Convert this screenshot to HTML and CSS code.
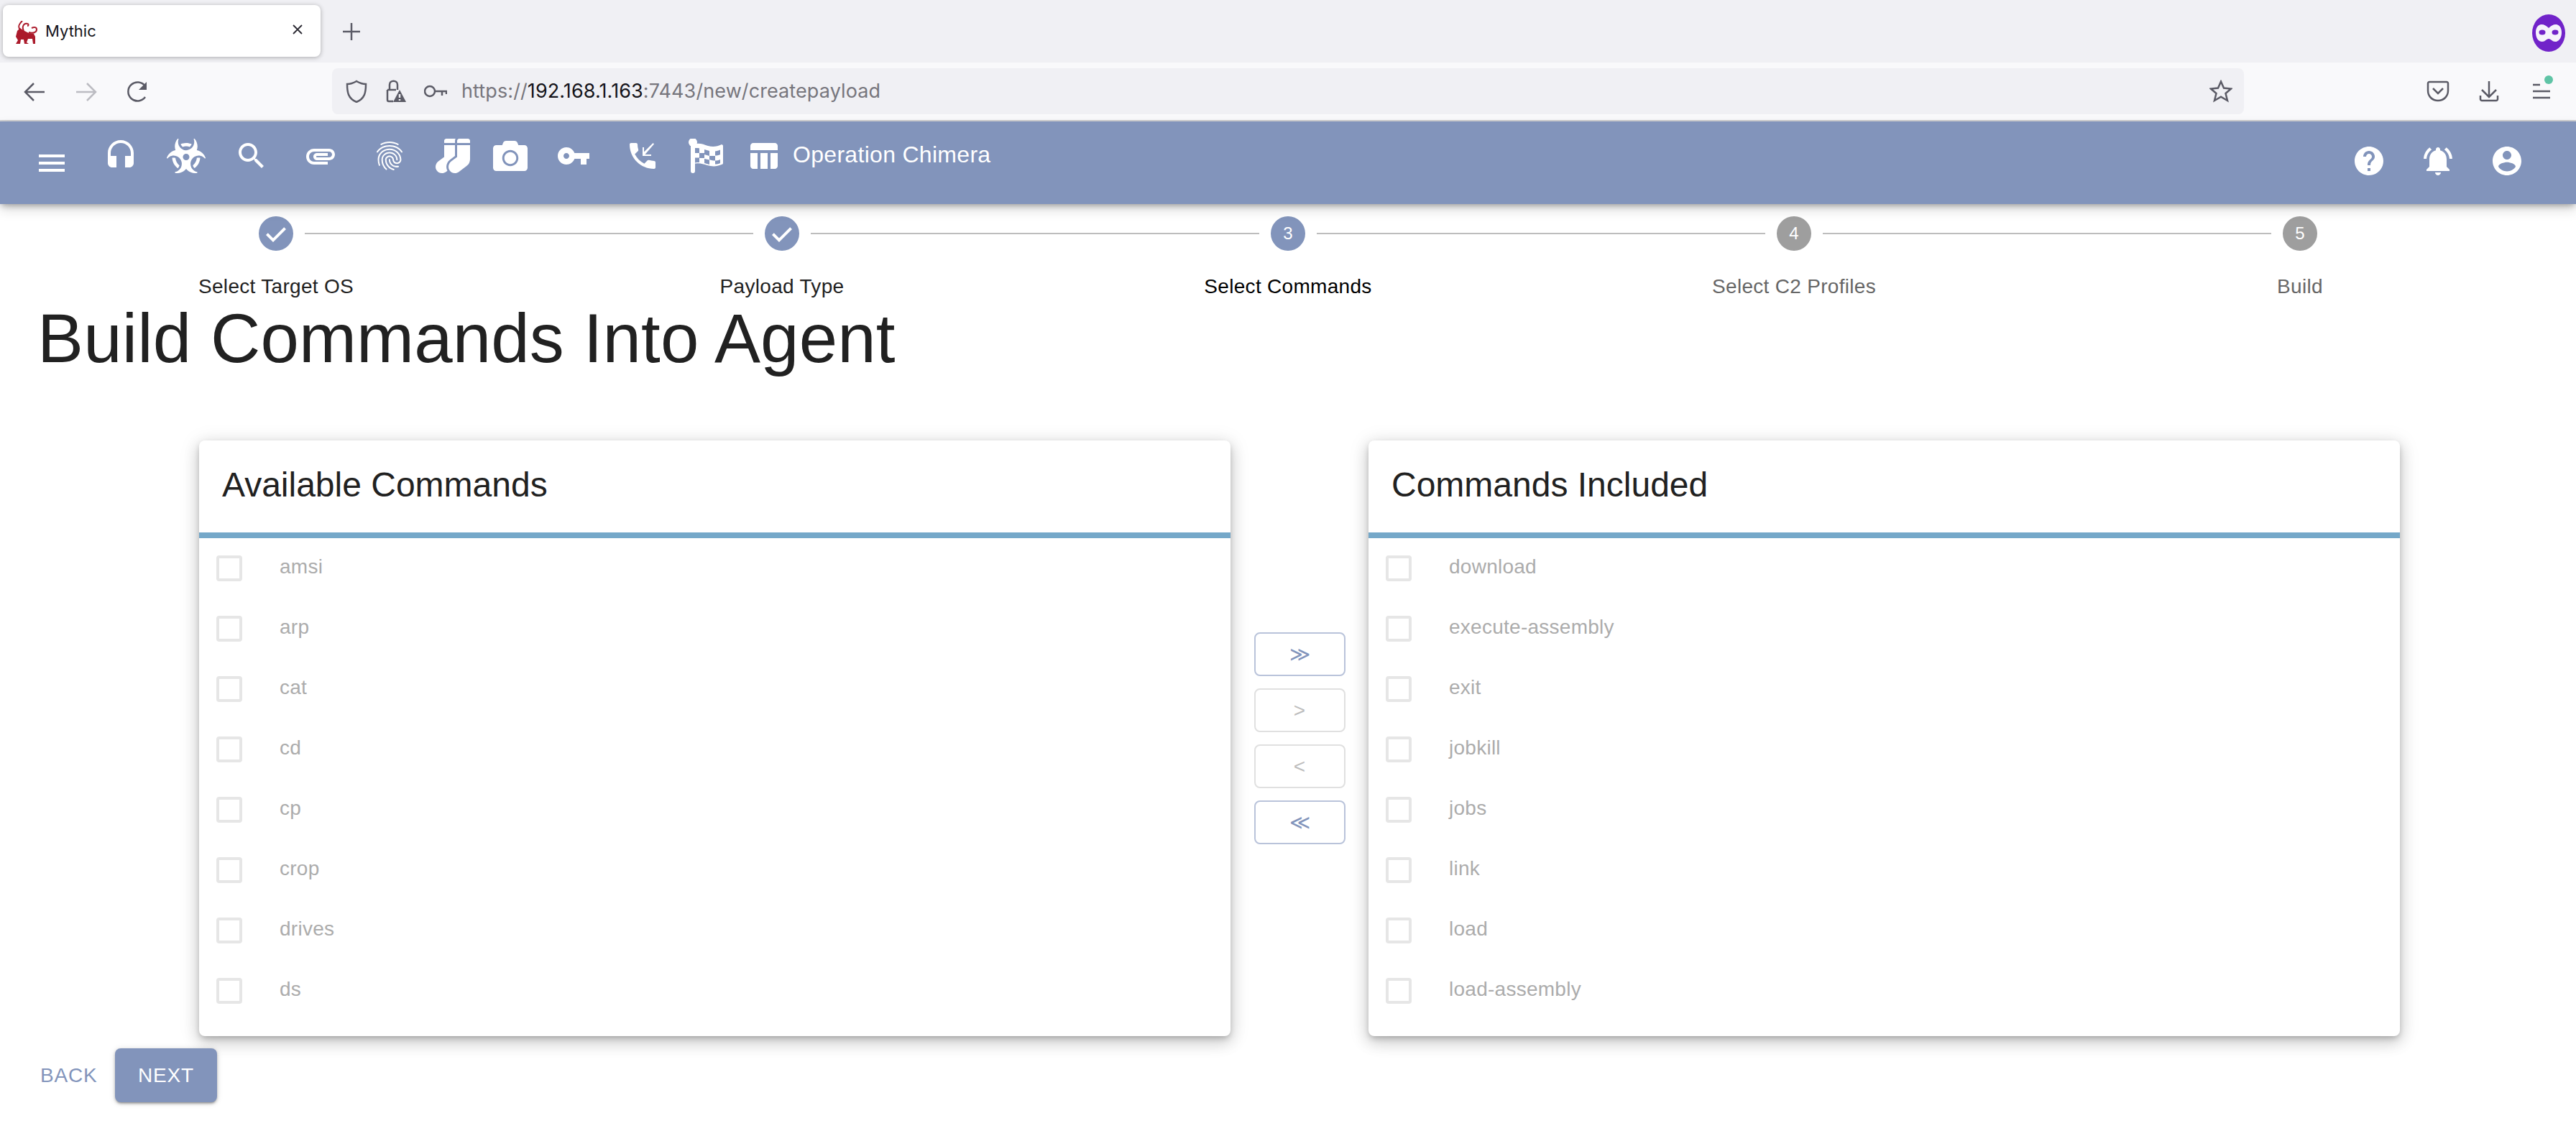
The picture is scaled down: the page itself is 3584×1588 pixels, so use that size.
FILE: index.html
```html
<!DOCTYPE html>
<html lang="en">
<head>
<meta charset="utf-8">
<title>Mythic</title>
<link rel="stylesheet" href="styles.css">
</head>
<body>
<div class="tabstrip">
  <div class="tab">
    <svg class="favicon" viewBox="0 0 32 32"><path class="fav-body" d="M4 14 8 10l4 3 8 4 7 1 2 4v10h-3l-1-7h-6l-2 5 3 2h-6l-1-6H9l-1 6H2l3-5-3-5z"/><path class="fav-curl" d="M8 12C4 8 7 4 11 0M13 14c-3-6 0-11 5-10 2 0 2 3 0 3M20 16c6 2 11 0 11-4 0-3-3-4-7-2"/></svg>
    <span class="tab-title">Mythic</span>
    <svg class="tab-close" viewBox="0 0 16 16"><path d="M2 2l12 12M14 2L2 14"/></svg>
  </div>
  <svg class="newtab" viewBox="0 0 24 24"><path d="M12 0v24M0 12h24"/></svg>
  <svg class="ext-mask" viewBox="0 0 46 52"><ellipse cx="23" cy="26" rx="23" ry="26" fill="#7123c9"/><path fill="#f6f3fb" d="M13 14c4 0 7 2 10 5 3-3 6-5 10-5 5 0 8 5 8 11 0 7-3 13-9 13-4 0-6-4-9-4s-5 4-9 4c-6 0-9-6-9-13 0-6 3-11 8-11z"/><ellipse cx="14" cy="25" rx="4.500" ry="3.500" fill="#7123c9"/><ellipse cx="32" cy="25" rx="4.500" ry="3.500" fill="#7123c9"/></svg>
</div>
<div class="toolbar">
  <svg class="tb-icon" viewBox="0 0 32 32"><path d="M30 16H4M15 4L3 16l12 12"/></svg>
  <svg class="tb-icon tb-dim" viewBox="0 0 32 32"><path d="M2 16h26M17 4l12 12-12 12"/></svg>
  <svg class="tb-icon" viewBox="0 0 32 32"><path d="M26 23a13 13 0 1 1 0-15"/><path class="solid" d="M28 2v11H17z"/></svg>
  <div class="urlbar">
    <svg class="tb-icon" viewBox="0 0 32 32"><path d="M16 2C11 5 6 6 3 6c0 11 1 20 13 25C28 26 29 17 29 6c-3 0-8-1-13-4z"/></svg>
    <svg class="tb-icon url-lock" viewBox="0 0 32 32"><path d="M6 14h12M6 14v14c0 1 0 2 2 2h6M9 14V7c0-7 11-7 11 0v7"/><path class="solid" d="M23 14l9 17H14z"/><path class="cut" d="M23 20v5M23 27v2"/></svg>
    <svg class="tb-icon url-key" viewBox="0 0 32 32"><circle cx="8" cy="16" r="7"/><path d="M15 16h17M25 16v6M31 16v4"/></svg>
    <span class="url-text">https://<span class="url-host">192.168.1.163</span>:7443/new/createpayload</span>
    <svg class="tb-icon url-star" viewBox="0 0 32 32"><path d="M16 2.500l4 9 10 1-7.500 6.500 2.500 10-9-5.300-9 5.300 2.500-10L2 12.500l10-1z"/></svg>
  </div>
  <svg class="tb-icon tb-pocket" viewBox="0 0 32 32"><path d="M4 3h24c1 0 2 1 2 2v10c0 8-6 14-14 14S2 23 2 15V5c0-1 1-2 2-2zM9 12l7 7 7-7"/></svg>
  <svg class="tb-icon tb-download" viewBox="0 0 32 32"><path d="M16 2v22M6 14l10 10 10-10M4 22v5c0 1 1 2 2 2h20c1 0 2-1 2-2v-5"/></svg>
  <div class="tb-menu">
    <svg class="tb-icon" viewBox="0 0 32 32"><path d="M4 7h10M4 16h24M4 25h24"/></svg>
    <span class="tb-badge"></span>
  </div>
</div>

<header class="appbar">
  <svg class="ic ic-menu" viewBox="0 0 24 24"><path d="M3 18h18v-2H3v2zm0-5h18v-2H3v2zm0-7v2h18V6H3z"/></svg>
  <svg class="ic g48" viewBox="0 0 24 24"><path d="M12 1c-4.970 0-9 4.030-9 9v7c0 1.660 1.340 3 3 3h3v-8H5v-2c0-3.870 3.130-7 7-7s7 3.130 7 7v2h-4v8h3c1.660 0 3-1.340 3-3v-7c0-4.970-4.030-9-9-9z"/></svg>
  <svg class="ic ic-wide g40" viewBox="0 0 576 512"><path d="M287.900 112c18.600 0 36.200 3.800 52.800 9.600 13.300-10.300 23.600-24.300 29.500-40.700-25.200-10.900-53-17-82.200-17-29.100 0-56.900 6-82.100 16.900 5.900 16.400 16.200 30.400 29.500 40.700 16.500-5.700 34-9.500 52.500-9.500zM163.600 438.700c12-11.800 20.400-26.400 24.500-42.400-32.900-26.400-54.800-65.300-58.900-109.600-8.500-2.800-17.200-4.600-26.400-4.600-7.600 0-15.200 1-22.500 3.100 4.100 62.800 36.500 118.300 83.300 153.500zm224.200-42.600c4.100 16 12.500 30.700 24.500 42.500 46.800-35.200 79.200-90.700 83.300-153.500-7.300-2-14.900-3.100-22.500-3.100-9.200 0-17.900 1.900-26.400 4.600-4.100 44.300-26 83.200-58.900 109.500zm113.500-205c-17.600-10.400-36.300-16.600-55.300-19.900 6-17.700 10-36.400 10-56.200 0-41-14.500-80.800-41-112.200-2.500-3-6.600-3.700-10-1.800-3.300 1.900-4.800 6-3.600 9.700 4.500 13.800 6.600 26.300 6.600 38.500 0 67.800-53.800 122.900-120 122.900S168 117 168 49.200c0-12.100 2.200-24.700 6.600-38.500 1.200-3.700-.3-7.800-3.600-9.700-3.400-1.900-7.500-1.200-10 1.800C134.600 34.200 120 74 120 115c0 19.800 3.900 38.500 10 56.200-18.900 3.300-37.700 9.500-55.300 19.900-34.600 20.500-61 53.300-74.300 92.400-1.300 3.700.2 7.700 3.500 9.800 3.300 2 7.500 1.300 10-1.600 9.400-10.800 19-19.100 29.200-25.100 57.300-33.900 130.800-13.700 163.900 45 33.100 58.700 13.400 134-43.900 167.900-10.200 6.100-22 10.400-35.800 13.400-3.700.8-6.400 4.200-6.400 8.100.1 4 2.700 7.300 6.500 8 39.700 7.800 80.600.8 115.200-19.700 18-10.600 32.900-24.500 45.300-40.100 12.400 15.600 27.300 29.500 45.300 40.100 34.600 20.500 75.500 27.500 115.200 19.700 3.800-.7 6.400-4 6.500-8 0-3.900-2.600-7.200-6.400-8.100-13.900-2.900-25.600-7.300-35.800-13.400-57.300-33.900-77-109.200-43.900-167.900s106.600-78.900 163.900-45c10.200 6.100 19.800 14.300 29.200 25.100 2.500 2.900 6.700 3.600 10 1.600s4.800-6.100 3.500-9.800c-13.100-39.100-39.500-72-74.100-92.400zm-213.400 129.300c-26.500 0-48-21.500-48-48s21.500-48 48-48 48 21.500 48 48-21.500 48-48 48z"/></svg>
  <svg class="ic g40" viewBox="0 0 24 24"><path d="M15.500 14h-.79l-.28-.27C15.410 12.590 16 11.110 16 9.500 16 5.910 13.090 3 9.500 3S3 5.910 3 9.500 5.910 16 9.500 16c1.610 0 3.090-.59 4.230-1.570l.27.28v.79l5 4.990L20.490 19l-4.990-5zm-6 0C7.010 14 5 11.990 5 9.500S7.010 5 9.500 5 14 7.010 14 9.500 11.990 14 9.500 14z"/></svg>
  <svg class="ic g48" viewBox="0 0 24 24"><path d="M2 12.500C2 9.460 4.460 7 7.500 7H18c2.210 0 4 1.790 4 4s-1.790 4-4 4H9.500C8.120 15 7 13.880 7 12.500S8.120 10 9.500 10H17v2H9.410c-.55 0-.55 1 0 1H18c1.100 0 2-.9 2-2s-.9-2-2-2H7.500C5.570 9 4 10.570 4 12.500S5.570 16 7.500 16H17v2H7.500C4.460 18 2 15.540 2 12.500z"/></svg>
  <svg class="ic g48" viewBox="0 0 24 24"><path d="M17.810 4.470c-.08 0-.16-.02-.23-.06C15.660 3.420 14 3 12.010 3c-1.980 0-3.860.47-5.570 1.410-.24.13-.54.04-.68-.2-.13-.24-.04-.55.2-.68C7.820 2.520 9.860 2 12.010 2c2.130 0 3.990.47 6.030 1.520.25.13.34.43.21.67-.09.18-.26.28-.44.28zM3.500 9.720c-.1 0-.2-.03-.29-.09-.23-.16-.28-.47-.12-.7.99-1.400 2.250-2.500 3.750-3.270C9.980 4.040 14 4.030 17.150 5.650c1.500.77 2.760 1.860 3.750 3.250.16.22.11.54-.12.7-.23.16-.54.11-.7-.12-.9-1.260-2.040-2.250-3.390-2.940-2.870-1.470-6.540-1.470-9.400.01-1.360.7-2.500 1.700-3.400 2.960-.08.14-.23.21-.39.21zm6.250 12.070c-.13 0-.26-.05-.35-.15-.87-.87-1.340-1.430-2.010-2.640-.69-1.230-1.050-2.730-1.050-4.340 0-2.970 2.540-5.390 5.660-5.390s5.660 2.420 5.660 5.390c0 .28-.22.5-.5.5s-.5-.22-.5-.5c0-2.420-2.090-4.390-4.660-4.390s-4.660 1.970-4.660 4.390c0 1.440.32 2.770.93 3.850.64 1.150 1.080 1.640 1.850 2.420.19.2.19.51 0 .71-.11.1-.24.15-.37.15zm7.170-1.850c-1.190 0-2.240-.3-3.100-.89-1.490-1.010-2.380-2.650-2.380-4.390 0-.28.22-.5.5-.5s.5.22.5.5c0 1.410.72 2.740 1.940 3.560.71.48 1.540.71 2.540.71.24 0 .64-.03 1.040-.1.27-.05.53.13.58.41.05.27-.13.53-.41.58-.57.11-1.070.12-1.210.12zM14.910 22c-.04 0-.09-.01-.13-.02-1.590-.44-2.630-1.030-3.720-2.100-1.400-1.390-2.170-3.240-2.170-5.220 0-1.620 1.380-2.940 3.080-2.940s3.080 1.320 3.080 2.940c0 1.070.93 1.940 2.080 1.940s2.080-.87 2.080-1.940c0-3.770-3.250-6.830-7.250-6.830-2.840 0-5.440 1.580-6.610 4.030-.39.81-.59 1.760-.59 2.800 0 .78.07 2.010.67 3.610.1.26-.03.55-.29.64-.26.1-.55-.04-.64-.29-.49-1.310-.73-2.610-.73-3.960 0-1.200.23-2.290.68-3.240 1.330-2.790 4.280-4.600 7.510-4.600 4.550 0 8.250 3.510 8.250 7.830 0 1.620-1.380 2.940-3.080 2.940s-3.080-1.320-3.080-2.940c0-1.070-.93-1.940-2.080-1.940s-2.080.87-2.080 1.940c0 1.710.66 3.310 1.870 4.510.95.94 1.860 1.460 3.270 1.850.27.07.42.35.35.61-.05.23-.26.38-.47.38z"/></svg>
  <svg class="ic g40" viewBox="0 0 512 512"><path d="M214.660 311.010L288 256V96H128v176l-86.650 64.610c-39.400 29.560-53.860 84.420-29.210 127.060C30.390 495.250 63.270 512 96.080 512c20.030 0 40.250-6.250 57.520-19.200l21.860-16.390c-29.850-55.380-13.540-125.840 39.200-165.400zM288 32c0-11.050 3.070-21.300 8.020-30.380C293.400.92 290.850 0 288 0H160c-17.670 0-32 14.330-32 32v32h160V32zM480 0H352c-17.670 0-32 14.330-32 32v32h192V32c0-17.670-14.330-32-32-32zM320 272l-86.650 64.610c-39.400 29.560-53.860 84.420-29.210 127.060 18.250 31.580 50.610 48.330 83.420 48.330 20.030 0 40.250-6.250 57.520-19.200l115.200-86.400A127.997 127.997 0 0 0 512 304V96H320v176z"/></svg>
  <svg class="ic g32" viewBox="0 0 512 512"><path d="M512 144v288c0 26.500-21.500 48-48 48H48c-26.500 0-48-21.500-48-48V144c0-26.500 21.500-48 48-48h88l12.300-32.900c7-18.700 24.900-31.100 44.900-31.100h125.500c20 0 37.900 12.400 44.900 31.100L376 96h88c26.500 0 48 21.500 48 48zM376 288c0-66.200-53.800-120-120-120s-120 53.800-120 120 53.800 120 120 120 120-53.800 120-120zm-32 0c0 48.500-39.500 88-88 88s-88-39.500-88-88 39.500-88 88-88 88 39.500 88 88z"/></svg>
  <svg class="ic g40" viewBox="0 0 24 24"><path d="M12.650 10C11.830 7.670 9.610 6 7 6c-3.310 0-6 2.690-6 6s2.690 6 6 6c2.610 0 4.830-1.670 5.650-4H17v4h4v-4h2v-4H12.650zM7 14c-1.100 0-2-.9-2-2s.9-2 2-2 2 .9 2 2-.9 2-2 2z"/></svg>
  <svg class="ic g48" viewBox="0 0 24 24"><path d="M20 15.500c-1.250 0-2.450-.2-3.570-.57-.35-.11-.74-.03-1.020.24l-2.200 2.200c-2.830-1.440-5.150-3.750-6.590-6.590l2.200-2.210c.28-.26.36-.65.25-1C8.700 6.450 8.500 5.250 8.500 4c0-.55-.45-1-1-1H4c-.55 0-1 .45-1 1 0 9.390 7.610 17 17 17 .55 0 1-.45 1-1v-3.500c0-.55-.45-1-1-1zM20 3.700 19.300 3 13 9.300V6h-1v6h6v-1h-4.300z"/></svg>
  <svg class="ic g40" viewBox="0 0 48 48">
    <circle cx="6" cy="5" r="6"/><rect x="3" y="6" width="6" height="42" rx="3"/>
    <path d="M7 8c7-3 14 0 20 2 7 2 13 1 19-2 1 0 2 1 2 2v24c0 1-1 2-2 2-7 3-13 3-20 1-6-2-12-4-19-2z"/>
    <path class="flag-cell" d="M9 13c2 0 4 0 6 .3V20H9zM22 15l7 2v7l-7-2zM37 17.500c2-.2 5-1 7-2V22c-2 1-5 1.500-7 1.500zM15 20h7v7h-7zM29 24h8v6.500c-3 0-5-.5-8-1.300zM9 26.500h6V33c-2 0-4 0-6 .5zM22 28l7 1.500V36l-7-2zM37 30.500c2 0 5-.5 7-1.500v5c-2 1-5 1.500-7 1.500z"/>
  </svg>
  <svg class="ic g32" viewBox="0 0 24 24"><path d="M10 10.020h5V21h-5zM17 21h3c1.100 0 2-.9 2-2v-9h-5v11zm3-18H5c-1.100 0-2 .9-2 2v3h19V5c0-1.100-.9-2-2-2zM3 19c0 1.100.9 2 2 2h3V10H3v9z"/></svg>
  <span class="op-name">Operation Chimera</span>
  <div class="app-right">
    <svg class="ic" viewBox="0 0 24 24"><path d="M12 2C6.480 2 2 6.480 2 12s4.480 10 10 10 10-4.480 10-10S17.520 2 12 2zm1 17h-2v-2h2v2zm2.070-7.750l-.9.92C13.450 12.900 13 13.500 13 15h-2v-.5c0-1.100.45-2.100 1.170-2.830l1.240-1.260c.37-.36.59-.86.59-1.410 0-1.100-.9-2-2-2s-2 .9-2 2H8c0-2.210 1.790-4 4-4s4 1.790 4 4c0 .88-.36 1.680-.93 2.250z"/></svg>
    <svg class="ic" viewBox="0 0 24 24"><path d="M7.580 4.080L6.150 2.650C3.750 4.480 2.170 7.300 2.030 10.500h2c.15-2.650 1.510-4.970 3.550-6.420zm12.390 6.420h2c-.15-3.200-1.730-6.020-4.120-7.850l-1.420 1.430c2.020 1.450 3.390 3.770 3.540 6.420zM18 11c0-3.070-1.640-5.640-4.500-6.320V4c0-.83-.67-1.500-1.500-1.500s-1.500.67-1.500 1.500v.68C7.630 5.360 6 7.920 6 11v5l-2 2v1h16v-1l-2-2v-5zm-6 11c.14 0 .27-.01.4-.04.65-.14 1.180-.58 1.440-1.180.1-.24.15-.5.15-.78h-4c.01 1.100.9 2 2.010 2z"/></svg>
    <svg class="ic" viewBox="0 0 24 24"><path d="M12 2C6.480 2 2 6.480 2 12s4.480 10 10 10 10-4.480 10-10S17.520 2 12 2zm0 3c1.660 0 3 1.340 3 3s-1.340 3-3 3-3-1.340-3-3 1.340-3 3-3zm0 14.200c-2.500 0-4.710-1.280-6-3.220.03-1.990 4-3.080 6-3.080 1.990 0 5.970 1.090 6 3.080-1.290 1.940-3.500 3.220-6 3.220z"/></svg>
  </div>
</header>

<main>
  <ol class="stepper">
    <li class="step">
      <div class="step-head"><span class="line line-none"></span><svg class="step-icon" viewBox="0 0 24 24"><path d="M12 0a12 12 0 1 0 0 24 12 12 0 0 0 0-24zm-2 18l-5-5 1.400-1.400 3.600 3.600 7.600-7.600L19 9l-9 9z"/></svg><span class="line"></span></div>
      <span class="step-label">Select Target OS</span>
    </li>
    <li class="step">
      <div class="step-head"><span class="line"></span><svg class="step-icon" viewBox="0 0 24 24"><path d="M12 0a12 12 0 1 0 0 24 12 12 0 0 0 0-24zm-2 18l-5-5 1.400-1.400 3.600 3.600 7.600-7.600L19 9l-9 9z"/></svg><span class="line"></span></div>
      <span class="step-label">Payload Type</span>
    </li>
    <li class="step">
      <div class="step-head"><span class="line"></span><span class="step-num step-num-active">3</span><span class="line"></span></div>
      <span class="step-label step-label-active">Select Commands</span>
    </li>
    <li class="step">
      <div class="step-head"><span class="line"></span><span class="step-num">4</span><span class="line"></span></div>
      <span class="step-label step-label-off">Select C2 Profiles</span>
    </li>
    <li class="step">
      <div class="step-head"><span class="line"></span><span class="step-num">5</span><span class="line line-none"></span></div>
      <span class="step-label step-label-off">Build</span>
    </li>
  </ol>

  <h1 class="page-title">Build Commands Into Agent</h1>

  <section class="transfer">
    <div class="panel">
      <h2 class="panel-title">Available Commands</h2>
      <ul class="cmd-list">
        <li class="cmd"><span class="box"></span><span class="cmd-name">amsi</span></li>
        <li class="cmd"><span class="box"></span><span class="cmd-name">arp</span></li>
        <li class="cmd"><span class="box"></span><span class="cmd-name">cat</span></li>
        <li class="cmd"><span class="box"></span><span class="cmd-name">cd</span></li>
        <li class="cmd"><span class="box"></span><span class="cmd-name">cp</span></li>
        <li class="cmd"><span class="box"></span><span class="cmd-name">crop</span></li>
        <li class="cmd"><span class="box"></span><span class="cmd-name">drives</span></li>
        <li class="cmd"><span class="box"></span><span class="cmd-name">ds</span></li>
      </ul>
    </div>
    <div class="moves">
      <button class="move move-on">≫</button>
      <button class="move">&gt;</button>
      <button class="move">&lt;</button>
      <button class="move move-on">≪</button>
    </div>
    <div class="panel">
      <h2 class="panel-title">Commands Included</h2>
      <ul class="cmd-list">
        <li class="cmd"><span class="box"></span><span class="cmd-name">download</span></li>
        <li class="cmd"><span class="box"></span><span class="cmd-name">execute-assembly</span></li>
        <li class="cmd"><span class="box"></span><span class="cmd-name">exit</span></li>
        <li class="cmd"><span class="box"></span><span class="cmd-name">jobkill</span></li>
        <li class="cmd"><span class="box"></span><span class="cmd-name">jobs</span></li>
        <li class="cmd"><span class="box"></span><span class="cmd-name">link</span></li>
        <li class="cmd"><span class="box"></span><span class="cmd-name">load</span></li>
        <li class="cmd"><span class="box"></span><span class="cmd-name">load-assembly</span></li>
      </ul>
    </div>
  </section>

  <div class="wizard-nav">
    <button class="btn-back">BACK</button>
    <button class="btn-next">NEXT</button>
  </div>
</main>
</body>
</html>
```

FILE: styles.css
```css
* { box-sizing: border-box; }
html, body { margin: 0; padding: 0; }
body {
  width: 3584px;
  height: 1588px;
  overflow: hidden;
  background: #fff;
  font-family: "Liberation Sans", Arial, sans-serif;
  color: #212121;
}

/* browser chrome */
.tabstrip {
  height: 87px;
  background: #f0f0f4;
  display: flex;
  align-items: flex-start;
  padding: 7px 15px 0 4px;
}
.tab {
  width: 442px;
  height: 72px;
  background: #fff;
  border-radius: 8px;
  box-shadow: 0 1px 6px rgba(0,0,0,.3);
  display: flex;
  align-items: center;
  padding: 0 24px 0 16px;
}
.favicon { width: 32px; height: 32px; margin-top: 4px; flex: none; }
.fav-body { fill: #ab1a2b; }
.fav-curl { fill: none; stroke: #ab1a2b; stroke-width: 2; }
.tab-title {
  font: 22px "Inter", sans-serif;
  color: #15141a;
  margin-left: 11px;
  flex: 1;
}
.tab-close { width: 16px; height: 16px; fill: none; stroke: #2b2a33; stroke-width: 1.800; margin-top: -4px; }
.newtab { width: 24px; height: 24px; fill: none; stroke: #5b5b66; stroke-width: 2.500; margin: 25px 0 0 31px; }
.ext-mask { width: 46px; height: 52px; margin: 13px 0 0 auto; }

.toolbar {
  height: 82px;
  background: #f9f9fb;
  border-bottom: 2px solid #cfcfd1;
  display: flex;
  align-items: flex-start;
  padding: 8px 0 0 32px;
}
.tb-icon {
  width: 32px;
  height: 32px;
  flex: none;
  fill: none;
  stroke: #5b5b66;
  stroke-width: 2.500;
  margin-top: 17px;
}
.tb-icon + .tb-icon { margin-left: 40px; }
.tb-dim { stroke: #bcbcc2; }
.solid { fill: #5b5b66; stroke: none; }
.cut { stroke: #f0f0f4; stroke-width: 2.500; }
.urlbar {
  width: 2660px;
  height: 64px;
  margin-left: 254px;
  background: #f0f0f4;
  border-radius: 8px;
  display: flex;
  align-items: flex-start;
  padding: 0 16px 0 18px;
}
.urlbar .tb-icon { margin-top: 16px; }
.urlbar .url-lock { margin-left: 21px; }
.urlbar .url-key { margin-left: 25px; }
.url-text {
  font: 27px/64px "Inter", sans-serif;
  letter-spacing: .1px;
  color: #77767d;
  margin-left: 20px;
  flex: 1;
  white-space: nowrap;
}
.url-host { color: #15141a; }
.urlbar .url-star { margin-left: 0; }
.tb-icon.tb-pocket { margin-left: 254px; margin-top: 16px; }
.tb-icon.tb-download { margin-left: 39px; margin-top: 16px; }
.tb-menu { position: relative; margin-left: 41px; height: 72px; }
.tb-menu .tb-icon { margin-top: 16px; }
.tb-badge {
  position: absolute;
  left: 20px;
  top: 10px;
  width: 12px;
  height: 12px;
  border-radius: 50%;
  background: #5fc4a6;
}

/* app bar */
.appbar {
  position: relative;
  height: 115px;
  background: #8294bb;
  box-shadow: 0 4px 8px -2px rgba(0,0,0,.3), 0 8px 16px rgba(0,0,0,.14);
  display: flex;
  align-items: flex-start;
  padding: 24px 72px 0 48px;
}
.ic { width: 48px; height: 48px; fill: #fff; flex: none; }
.ic-wide { width: 54px; }
.ic-menu { margin-top: 10px; }
.flag-cell { fill: #8294bb; }
.g48 { margin-left: 48px; }
.g40 { margin-left: 40px; }
.g32 { margin-left: 32px; }
.op-name {
  font-size: 32px;
  line-height: 44px;
  letter-spacing: .3px;
  color: #fff;
  margin-left: 17px;
  white-space: nowrap;
}
.app-right {
  margin-left: auto;
  margin-top: 7px;
  display: flex;
  gap: 48px;
}

/* stepper */
.stepper {
  list-style: none;
  margin: 0;
  padding: 17px 32px 0;
  display: flex;
}
.step {
  flex: 1;
  display: flex;
  flex-direction: column;
  align-items: center;
}
.step-head {
  width: 100%;
  display: flex;
  align-items: center;
  gap: 16px;
}
.line { flex: 1; height: 2px; background: #bdbdbd; }
.line-none { visibility: hidden; }
.step-icon { width: 48px; height: 48px; fill: #8294bb; flex: none; }
.step-num {
  width: 48px;
  height: 48px;
  border-radius: 50%;
  background: #9e9e9e;
  color: #fff;
  font-size: 24px;
  line-height: 48px;
  text-align: center;
  flex: none;
}
.step-num-active { background: #8294bb; }
.step-label {
  margin-top: 34px;
  font-size: 28px;
  line-height: 32px;
  letter-spacing: .3px;
  color: #212121;
}
.step-label-active { color: #000; }
.step-label-off { color: #666; }

/* title */
.page-title {
  margin: 0 0 0 52px;
  font-size: 96px;
  font-weight: 400;
  line-height: 112px;
  letter-spacing: .14px;
  color: #212121;
}

/* transfer list */
.transfer {
  display: flex;
  padding-left: 277px;
  margin-top: 86px;
}
.panel {
  width: 1435px;
  background: #fff;
  border-radius: 8px;
  box-shadow: 0 4px 8px -2px rgba(0,0,0,.25), 0 8px 20px 2px rgba(0,0,0,.14), 0 4px 28px 4px rgba(0,0,0,.08);
  padding-bottom: 21px;
}
.panel-title {
  margin: 0;
  height: 136px;
  border-bottom: 8px solid #75a8c9;
  padding: 0 32px;
  font-size: 48px;
  font-weight: 400;
  line-height: 124px;
  color: #212121;
}
.cmd-list { list-style: none; margin: 0; padding: 0; }
.cmd {
  height: 84px;
  display: flex;
  align-items: center;
  padding-left: 24px;
}
.box {
  width: 36px;
  height: 36px;
  border: 4px solid #e6e6e6;
  border-radius: 4px;
  flex: none;
}
.cmd-name {
  margin-left: 52px;
  font-size: 28px;
  letter-spacing: .26px;
  color: #acacac;
  margin-top: -4px;
}
.moves {
  width: 192px;
  display: flex;
  flex-direction: column;
  align-items: center;
  justify-content: center;
  gap: 17px;
}
.move {
  width: 127px;
  height: 61px;
  border: 2px solid #e0e0e0;
  border-radius: 8px;
  background: #fff;
  font-family: "Liberation Sans", sans-serif;
  font-size: 28px;
  color: #bdbdbd;
  padding: 0;
}
.move-on { border-color: #b9c3da; color: #8294bb; }

/* wizard nav */
.wizard-nav {
  display: flex;
  align-items: stretch;
  padding-left: 40px;
  margin-top: 17px;
}
.btn-back, .btn-next {
  font-family: "Liberation Sans", sans-serif;
  font-size: 28px;
  letter-spacing: .8px;
  height: 75px;
  border: 0;
  border-radius: 8px;
}
.btn-back {
  width: 120px;
  background: transparent;
  color: #8294bb;
  text-align: left;
  padding: 0 0 0 16px;
}
.btn-next {
  width: 142px;
  background: #8294bb;
  color: #fff;
  padding: 0;
  box-shadow: 0 3px 3px -2px rgba(0,0,0,.3), 0 2px 4px rgba(0,0,0,.2), 0 1px 10px rgba(0,0,0,.12);
}
```
